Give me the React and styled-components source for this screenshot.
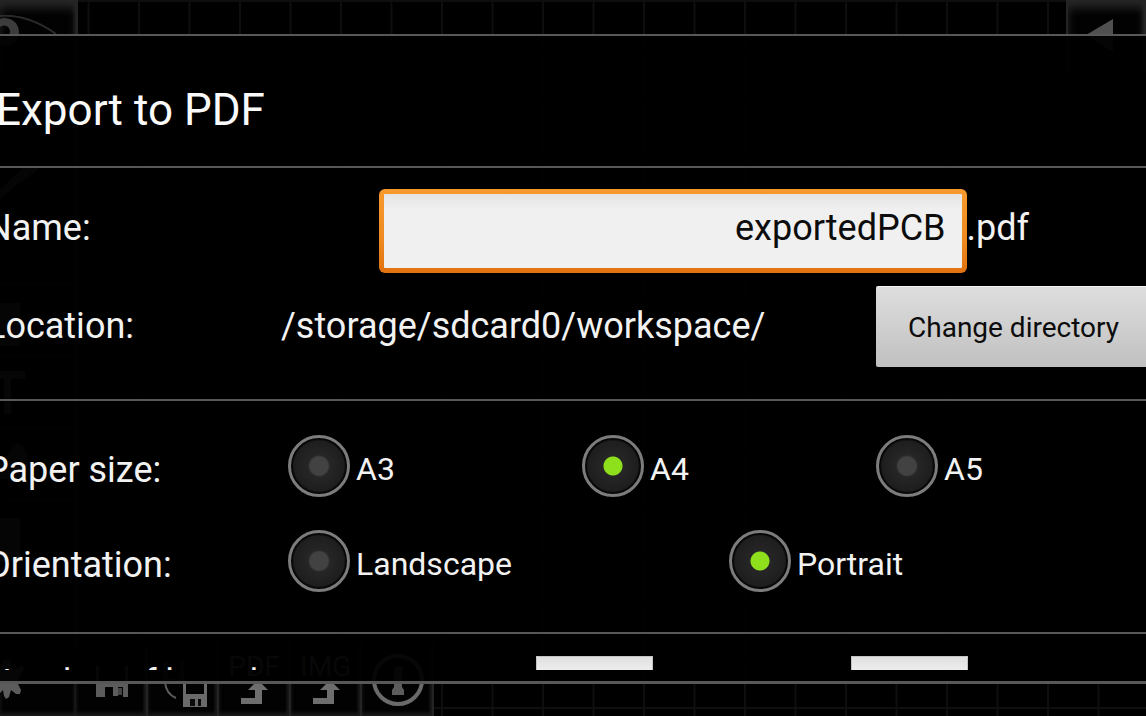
import React from "react";
import styled, { createGlobalStyle, css } from "styled-components";

const GlobalStyle = createGlobalStyle`
  *, *::before, *::after { box-sizing: border-box; }
  html, body { margin: 0; background: #000; }
  body { font-family: Roboto, "Noto Sans", sans-serif; color: #f2f2f2; overflow: hidden; }
`;

const Screen = styled.div`
  position: relative;
  display: flex;
  height: 100vh;
  padding: 34px 0 32px;
  overflow: hidden;
`;

/* ---------- dimmed editor behind the dialog ---------- */

const Editor = styled.div`
  position: absolute;
  inset: 0;
  display: flex;
  justify-content: space-between;
`;

const Board = styled.svg`
  position: absolute;
  inset: 0;
  width: 100%;
  height: 100%;
`;

const Rail = styled.div`
  position: relative;
  display: grid;
  grid-template-rows: repeat(10, minmax(0, 1fr));
  width: 76px;
  background: #020202;
`;

const BottomBar = styled.div`
  position: relative;
  display: grid;
  grid-template-columns: repeat(5, minmax(0, 1fr));
  width: 358px;
  height: 10%;
  margin-right: auto;
  align-self: flex-end;
`;

const RightBar = styled.div`
  position: relative;
  width: 80px;
  height: 10%;
`;

const Tool = styled.button`
  display: flex;
  flex-direction: column;
  align-items: center;
  justify-content: center;
  width: 100%;
  height: 100%;
  min-height: 0;
  padding: 0;
  border: 0;
  border-right: 2px solid #242424;
  border-left: ${(p) => (p.$leftEdge ? "2px solid #242424" : "0")};
  background: #020202;
  box-shadow: ${(p) => (p.$top ? "inset 0 8px 10px #262626" : "inset 0 -3px 4px #1c1c1c")},
    inset -2px 0 3px #1a1a1a;
  color: #666;
  font: 28px/24px Roboto, sans-serif;

  svg { display: block; flex: none; }
`;

/* ---------- dialog ---------- */

const Dialog = styled.section`
  position: relative;
  display: flex;
  flex: 1;
  flex-direction: column;
  min-width: 0;
  padding-bottom: 11px;
  border: solid #585858;
  border-width: 2px 0 3px;
  background: rgba(0, 0, 0, 0.93);
`;

const Title = styled.h1`
  flex: none;
  margin: 0 0 0 -4px;
  padding: 48px 0 30px;
  font-size: 44px;
  font-weight: 400;
  line-height: 52px;
  color: #fafafa;
`;

const Body = styled.form`
  flex: 1;
  min-height: 0;
  overflow: hidden;
  border-top: 2px solid #585858;
`;

const Group = styled.div`
  padding: ${(p) => p.$pad || "0"};
  border-bottom: 2px solid #585858;
`;

const rowText = css`
  font-size: 36px;
  line-height: 42px;
`;

const Row = styled.div`
  display: flex;
  align-items: center;
  height: ${(p) => p.$height}px;
  margin-left: -14px;
  ${rowText}
`;

const Label = styled.label`
  flex: none;
  width: ${(p) => p.$width || 295}px;
  padding: ${(p) => p.$pad || "0"};
`;

const NameField = styled.span`
  display: flex;
  flex: 1;
  align-items: center;
`;

const NameInput = styled.input`
  flex: none;
  width: 76.6%;
  height: 84px;
  padding: 0 16px 6px;
  border: 5px solid transparent;
  border-radius: 6px;
  outline: 0;
  background:
    linear-gradient(#e4e4e4, #f0f0f0 16px) padding-box,
    linear-gradient(#f79a2e, #ee8a20 60%, #e2720f) border-box;
  color: #0c0c0c;
  font: 36px/42px Roboto, sans-serif;
  text-align: right;
`;

const Suffix = styled.span`
  padding-bottom: 6px;
`;

const Path = styled.output`
  flex: 1;
`;

const ChangeButton = styled.button`
  flex: none;
  width: 270px;
  height: 81px;
  padding: 2px 26px 0 32px;
  border: 0;
  border-top: 1px solid #f2f2f2;
  border-radius: 2px 0 0 2px;
  background: linear-gradient(#dedede, #c0c0c0);
  color: #0c0c0c;
  font: 28px/34px Roboto, sans-serif;
  text-align: left;
  white-space: nowrap;
`;

const Options = styled.div`
  display: grid;
  grid-template-columns: repeat(${(p) => p.$count}, 1fr);
  flex: 1;
  margin-right: -17px;
`;

const Option = styled.label`
  display: flex;
  align-items: center;
  gap: 6px;
  padding-left: 7px;
  font-size: 32px;
  line-height: 38px;

  span { padding-top: 6px; }
`;

const Radio = styled.input`
  appearance: none;
  flex: none;
  width: 62px;
  height: 62px;
  margin: 0;
  border: 3px solid #7c7c7c;
  border-radius: 50%;
  background: radial-gradient(circle, #424242 9px, #262626 11px, #1e1e1e 25px, #050505 27px);

  &:checked {
    background: radial-gradient(circle, #8fe01c 9px, #262626 10px, #1e1e1e 25px, #050505 27px);
  }
`;

const CountRow = styled.div`
  display: flex;
  align-items: flex-start;
  margin-left: -14px;
  padding-top: 22px;
  ${rowText}
`;

const CountLabel = styled.label`
  flex: none;
  width: 550px;
  padding-top: 6px;
`;

const CountInput = styled.input`
  width: 117px;
  height: 84px;
  margin-right: 198px;
  padding: 0 16px;
  border: 1px solid #c4c4c4;
  background: linear-gradient(#e0e0e0, #f0f0f0 16px);
  color: #0c0c0c;
  font: 36px/42px Roboto, sans-serif;
`;

const EyeIcon = () => (
  <svg width="76" height="72" viewBox="0 0 76 72" fill="none">
    <path d="M0 16Q28 14 56 34" stroke="#2a2a2a" strokeWidth="2" />
    <path d="M0 19a14 14 0 0 1 19 13 14 14 0 0 1-19 13V36a6 6 0 1 0 0-9z" fill="#3c3c3c" />
  </svg>
);

const PenIcon = () => (
  <svg width="76" height="72" viewBox="0 0 76 72">
    <path d="M0 46L24 24 44 22 12 46 0 56z" fill="#444" />
  </svg>
);

const SquareIcon = () => (
  <svg width="76" height="72" viewBox="0 0 76 72">
    <path d="M0 17H20V60H0z" fill="#444" />
  </svg>
);

const TextIcon = () => (
  <svg width="76" height="72" viewBox="0 0 76 72">
    <path d="M0 13H25V21H11V56H4V21H0z" fill="#5a5a5a" />
  </svg>
);

const DropIcon = () => (
  <svg width="76" height="72" viewBox="0 0 76 72">
    <path d="M8 26Q13 12 20 15 26 18 27 28V50H0V32z" fill="#444" />
  </svg>
);

const GearIcon = () => (
  <svg width="76" height="72" viewBox="0 0 76 72">
    <path
      d="M4 16H10L11 23 16 25 22 21 24 25 20 31 17 38 21 46 20 50 16 50 11 46 9 53 6 55 4 52 3 46 0 49V24z"
      fill="#5c5c5c"
    />
  </svg>
);

const SaveIcon = () => (
  <svg width="72" height="72" viewBox="0 0 72 72">
    <path d="M21 21H24V38H50V21H53V53H48V43H43V52H38V43H30V53H21z" fill="#5c5c5c" />
    <path d="M43 44H47V51H43z" fill="#444" />
  </svg>
);

const SaveAsIcon = () => (
  <svg width="72" height="72" viewBox="0 0 72 72">
    <path d="M19 38Q20 50 30 54" fill="none" stroke="#5c5c5c" strokeWidth="2" />
    <path d="M17 18H22V35H34V18H38V38H17z" fill="#333" />
    <path d="M37 36H40V50H58V36H61V63H37z" fill="#6a6a6a" />
    <path d="M44 55H49V62H44zM52 55H55V62H52z" fill="#0a0a0a" />
  </svg>
);

const ExportIcon = () => (
  <svg width="30" height="26" viewBox="0 0 30 26">
    <path d="M19 1L29 11H23V25H2V19H16V11H9z" fill="#6e6e6e" />
  </svg>
);

const InfoIcon = () => (
  <svg width="56" height="56" viewBox="0 0 56 56">
    <circle cx="29" cy="28" r="24" fill="none" stroke="#6a6a6a" strokeWidth="4" />
    <path d="M26 15H34V21H33V35L35 38V43H23V38L25 35V21H25z" fill="#5c5c5c" />
  </svg>
);

const BackIcon = () => (
  <svg width="76" height="72" viewBox="0 0 76 72">
    <path d="M18 35L45 19V52z" fill="#505050" />
  </svg>
);

const Empty = () => null;

const railTools = [
  ["View", EyeIcon],
  ["Grid", Empty],
  ["Track", PenIcon],
  ["Pad", Empty],
  ["Area", SquareIcon],
  ["Text", TextIcon],
  ["Fill", DropIcon],
  ["Component", SquareIcon],
  ["Layer", Empty],
  ["Settings", GearIcon],
];

function EditorBackdrop() {
  return (
    <Editor aria-hidden="true">
      <Board>
        <defs>
          <pattern id="grid" x="37" y="0" width="50.5" height="50.5" patternUnits="userSpaceOnUse">
            <path d="M1 0V50.5M0 1H50.5" stroke="#0e0e0e" strokeWidth="2" />
          </pattern>
        </defs>
        <rect width="100%" height="100%" fill="url(#grid)" />
      </Board>
      <Rail>
        {railTools.map(([name, Icon], i) => (
          <Tool key={name} tabIndex={-1} title={name} $top={i === 0}>
            <Icon />
          </Tool>
        ))}
      </Rail>
      <BottomBar>
        <Tool tabIndex={-1} title="Save"><SaveIcon /></Tool>
        <Tool tabIndex={-1} title="Save as"><SaveAsIcon /></Tool>
        <Tool tabIndex={-1}>PDF<ExportIcon /></Tool>
        <Tool tabIndex={-1}>IMG<ExportIcon /></Tool>
        <Tool tabIndex={-1} title="Info"><InfoIcon /></Tool>
      </BottomBar>
      <RightBar>
        <Tool tabIndex={-1} title="Collapse" $top $leftEdge><BackIcon /></Tool>
      </RightBar>
    </Editor>
  );
}

function RadioOption({ name, value, checked }) {
  return (
    <Option>
      <Radio type="radio" name={name} value={value} defaultChecked={checked} />
      <span>{value}</span>
    </Option>
  );
}

export default function App() {
  return (
    <>
      <GlobalStyle />
      <Screen>
        <EditorBackdrop />
        <Dialog role="dialog" aria-labelledby="title">
          <Title id="title">Export to PDF</Title>
          <Body>
            <Group $pad="16px 0 25px">
              <Row $height={94}>
                <Label htmlFor="file" $width={393} $pad="0 0 6px">Name:</Label>
                <NameField>
                  <NameInput id="file" defaultValue="exportedPCB" />
                  <Suffix>.pdf</Suffix>
                </NameField>
              </Row>
              <Row $height={96}>
                <Label htmlFor="path">Location:</Label>
                <Path id="path">/storage/sdcard0/workspace/</Path>
                <ChangeButton type="button">Change directory</ChangeButton>
              </Row>
            </Group>
            <Group $pad="17px 0 24px">
              <Row $height={95}>
                <Label as="span" $pad="8px 0 0">Paper size:</Label>
                <Options $count={3} role="radiogroup" aria-label="Paper size">
                  <RadioOption name="paper" value="A3" />
                  <RadioOption name="paper" value="A4" checked />
                  <RadioOption name="paper" value="A5" />
                </Options>
              </Row>
              <Row $height={95}>
                <Label as="span" $pad="8px 0 0">Orientation:</Label>
                <Options $count={2} role="radiogroup" aria-label="Orientation">
                  <RadioOption name="orientation" value="Landscape" />
                  <RadioOption name="orientation" value="Portrait" checked />
                </Options>
              </Row>
            </Group>
            <CountRow>
              <CountLabel htmlFor="columns">Number of boards:</CountLabel>
              <CountInput id="columns" aria-label="Boards across" />
              <CountInput id="rows" aria-label="Boards down" />
            </CountRow>
          </Body>
        </Dialog>
      </Screen>
    </>
  );
}
